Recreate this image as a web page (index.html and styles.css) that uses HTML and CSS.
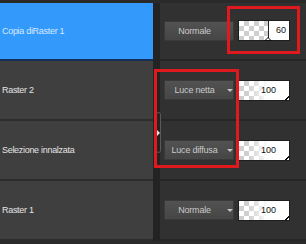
FILE: index.html
```html
<!DOCTYPE html>
<html>
<head>
<meta charset="utf-8">
<link rel="stylesheet" href="styles.css">
</head>
<body>
<div class="app">
  <div class="topbar"></div>
  <div class="main">
    <div class="layers">
      <div class="layer selected"><span class="name">Copia diRaster 1</span></div>
      <div class="layer"><span class="name">Raster 2</span></div>
      <div class="layer"><span class="name">Selezione innalzata</span></div>
      <div class="layer"><span class="name">Raster 1</span></div>
    </div>
    <div class="splitter"></div>
    <div class="props">
      <div class="prop-row">
        <div class="blend"><span class="label">Normale</span><span class="dots"><i></i><i></i></span></div>
        <div class="opacity editing"><div class="checker solid"></div><span class="num">60</span><span class="marker"></span></div>
      </div>
      <div class="prop-row">
        <div class="blend"><span class="label">Luce netta</span><span class="arrow"></span></div>
        <div class="opacity"><div class="checker fade"></div><span class="num">100</span><span class="corner"></span></div>
      </div>
      <div class="prop-row">
        <div class="blend"><span class="label">Luce diffusa</span><span class="arrow"></span></div>
        <div class="opacity"><div class="checker fade"></div><span class="num">100</span><span class="corner"></span></div>
      </div>
      <div class="prop-row">
        <div class="blend"><span class="label">Normale</span><span class="arrow"></span></div>
        <div class="opacity"><div class="checker fade"></div><span class="num">100</span><span class="corner"></span></div>
      </div>
    </div>
  </div>
  <div class="handle"><span class="handle-tri"></span></div>
  <div class="mark mark-a"></div>
  <div class="mark mark-b"></div>
</div>
</body>
</html>
```

FILE: styles.css
```css
html, body {
  margin: 0;
  padding: 0;
  background: #2a2a2a;
}
.app {
  position: relative;
  width: 306px;
  height: 244px;
  overflow: hidden;
  background: #2a2a2a;
  font-family: "Liberation Sans", Arial, sans-serif;
}
.topbar {
  height: 3px;
  background: #2a2a2a;
}
.main {
  display: grid;
  grid-template-columns: 153px 7px 1fr;
}
.layers {
  display: flex;
  flex-direction: column;
  background: #3f3f3f;
}
.layer {
  height: 58px;
  border-bottom: 2px solid #2c2c2c;
  display: flex;
  align-items: center;
  padding-left: 2px;
  color: #e4e4e4;
  font-size: 9px;
  letter-spacing: -0.3px;
}
.layer.selected {
  height: 56px;
  background: #3399fb;
  border-bottom-color: #14305a;
  color: #d7e9ff;
}
.splitter {
  background: #232323;
}
.props {
  display: flex;
  flex-direction: column;
  background: #313131;
}
.prop-row {
  height: 58px;
  border-bottom: 2px solid #262626;
  display: flex;
  align-items: center;
  gap: 4px;
  padding-left: 4px;
}
.prop-row:first-child {
  height: 56px;
}
.blend {
  width: 70px;
  height: 20px;
  box-sizing: border-box;
  background: linear-gradient(#525252, #464646);
  border: 1px solid #3a3a3a;
  border-radius: 1px;
  display: flex;
  align-items: center;
  position: relative;
  color: #c9c9c9;
  font-size: 9px;
  letter-spacing: -0.2px;
}
.label {
  width: 59px;
  text-align: center;
}
.arrow {
  width: 0;
  height: 0;
  border-left: 3px solid transparent;
  border-right: 3px solid transparent;
  border-top: 3px solid #c4c4c4;
  margin-left: 3px;
}
.dots {
  display: flex;
  flex-direction: column;
  gap: 2px;
  margin-left: 4px;
}
.dots i {
  display: block;
  width: 1px;
  height: 1px;
  background: #e8e8e8;
}
.opacity {
  position: relative;
  width: 52px;
  height: 21px;
  box-sizing: border-box;
  background: #ffffff;
  border: 1px solid #1e1e1e;
  color: #111;
  font-size: 9px;
  display: flex;
  align-items: center;
}
.opacity.editing {
  margin-top: -2px;
}
.checker {
  position: absolute;
  left: 0;
  top: 0;
  bottom: 0;
  background-color: #ffffff;
  background-image:
    linear-gradient(45deg, #cfcfcf 25%, transparent 25%, transparent 75%, #cfcfcf 75%),
    linear-gradient(45deg, #cfcfcf 25%, transparent 25%, transparent 75%, #cfcfcf 75%);
  background-size: 10px 10px;
  background-position: 0 0, 5px 5px;
}
.checker.solid {
  width: 29px;
  border-right: 1px solid #222;
}
.checker.fade {
  width: 30px;
  -webkit-mask-image: linear-gradient(to right, #000 30%, transparent 100%);
  mask-image: linear-gradient(to right, #000 30%, transparent 100%);
}
.num {
  position: relative;
  margin-left: auto;
}
.editing .num {
  margin-right: 3px;
}
.opacity:not(.editing) .num {
  margin-right: 13px;
}
.marker {
  position: absolute;
  left: 25px;
  bottom: -1px;
  width: 0;
  height: 0;
  border-left: 4px solid transparent;
  border-right: 4px solid transparent;
  border-bottom: 4px solid #111;
}
.marker::after {
  content: "";
  position: absolute;
  left: -2px;
  top: 1.5px;
  border-left: 2px solid transparent;
  border-right: 2px solid transparent;
  border-bottom: 2px solid #fff;
}
.corner {
  position: absolute;
  right: 0;
  bottom: 0;
  width: 4px;
  height: 4px;
  background: linear-gradient(135deg, transparent 50%, #111 50%, #111 65%, transparent 65%);
}
.handle {
  position: absolute;
  left: 156px;
  top: 112px;
  width: 5px;
  height: 41px;
  box-sizing: border-box;
  border: 1px solid #5a5a5a;
  border-radius: 3px;
}
.handle-tri {
  position: absolute;
  left: 0;
  top: 17px;
  width: 0;
  height: 0;
  border-top: 3px solid transparent;
  border-bottom: 3px solid transparent;
  border-left: 3px solid #e6e6e6;
}
.mark {
  position: absolute;
  box-sizing: border-box;
  border: 3px solid #df1a1f;
}
.mark-a {
  left: 154px;
  top: 69px;
  width: 85px;
  height: 99px;
}
.mark-b {
  left: 227px;
  top: 6px;
  width: 73px;
  height: 48px;
}
```
